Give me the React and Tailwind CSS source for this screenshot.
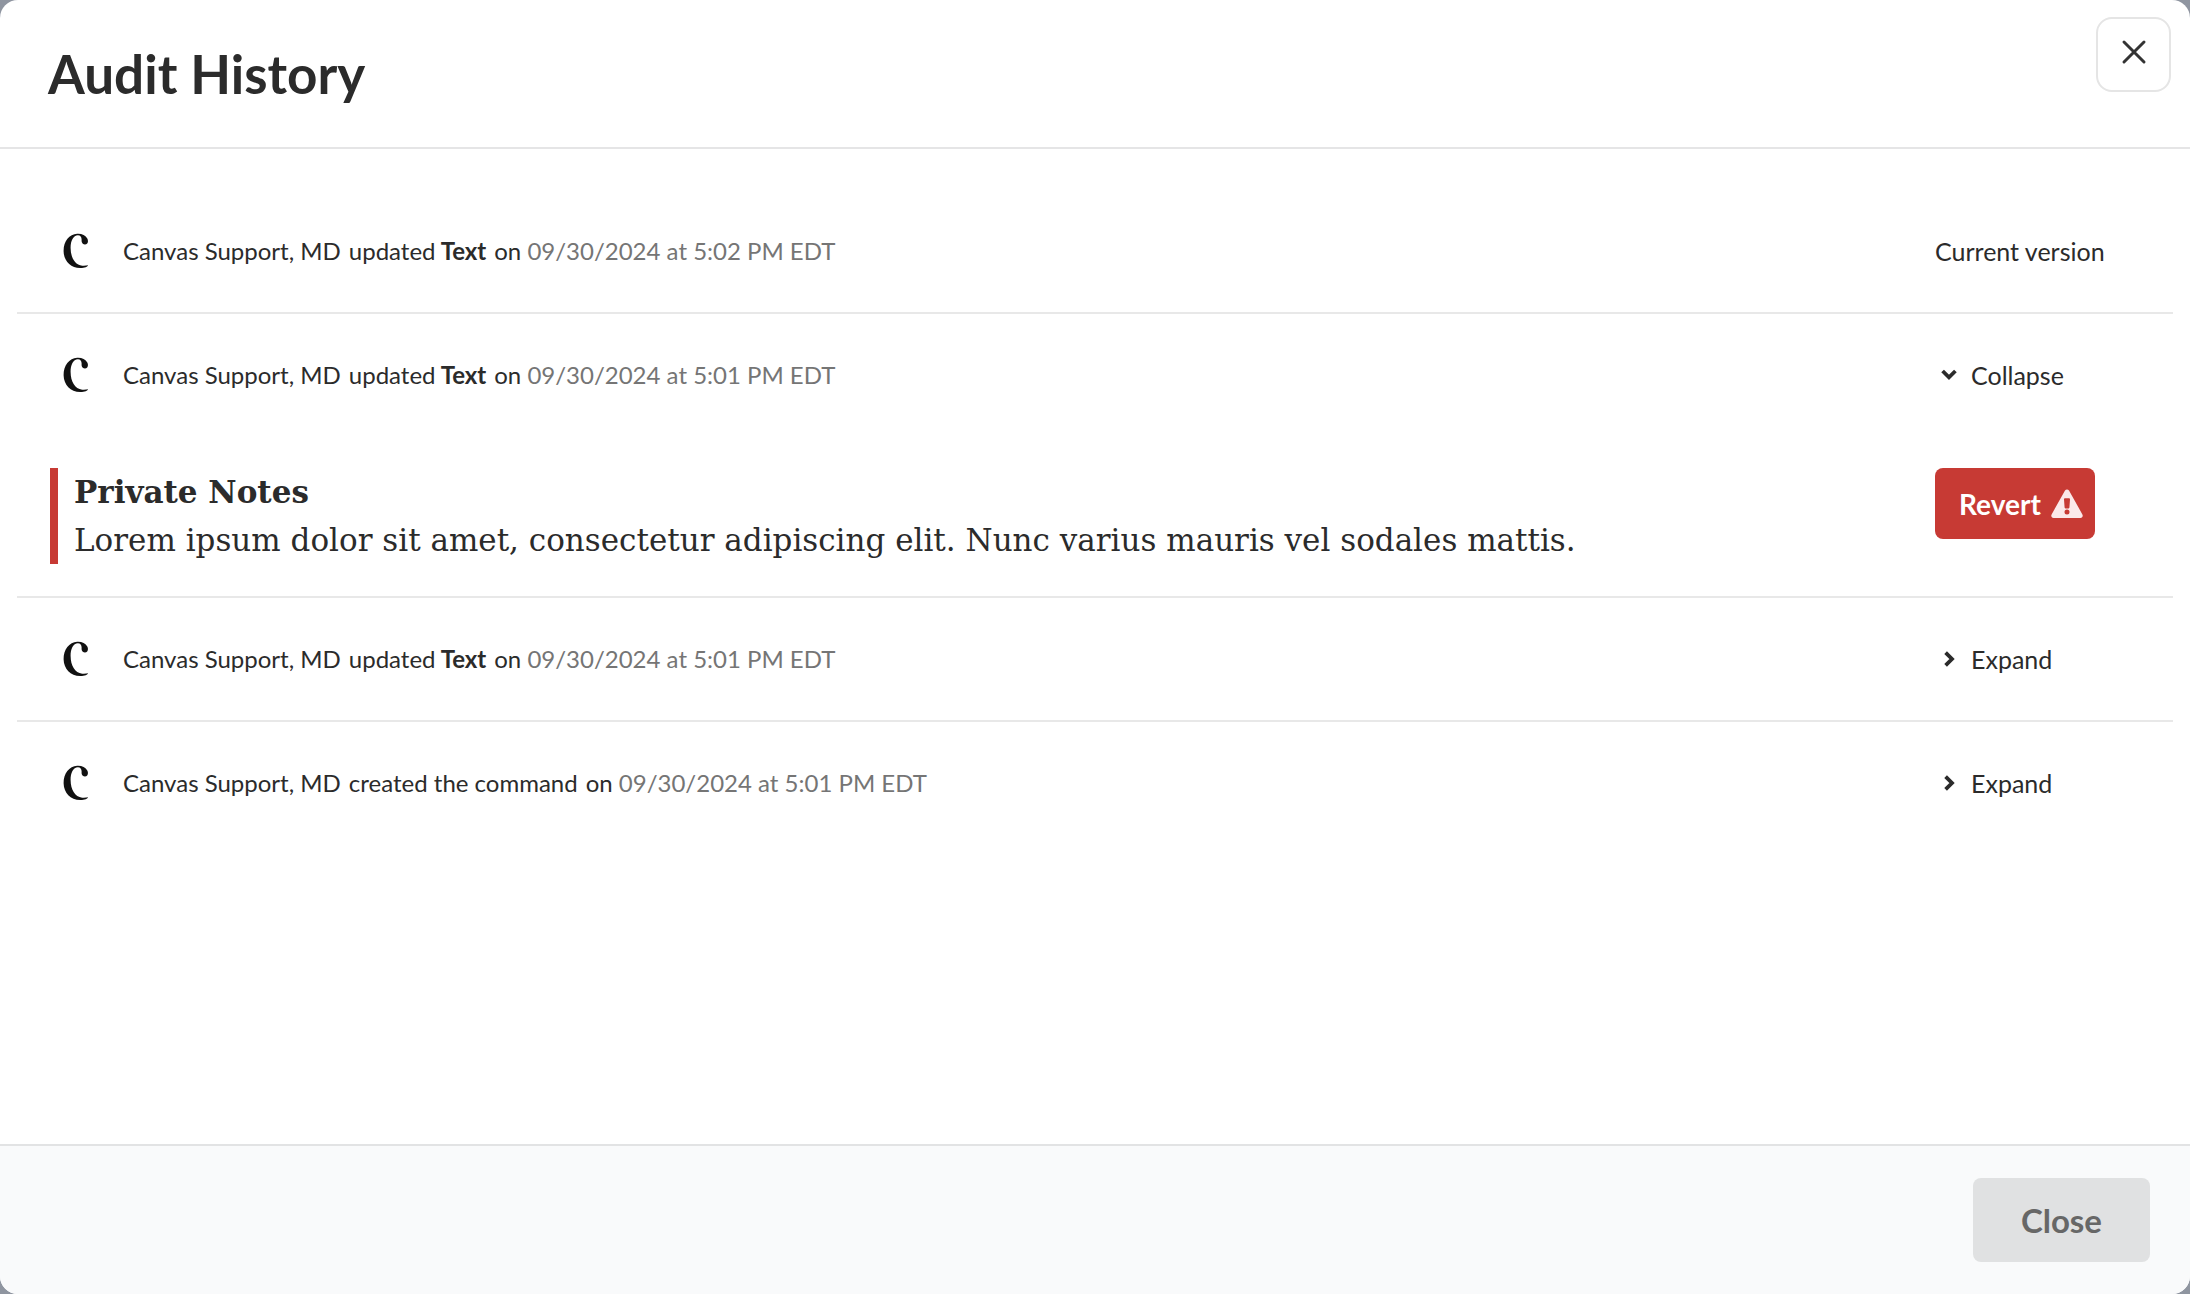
import React, { useState } from "react";

function CanvasLogo() {
  return (
    <svg viewBox="0 0 26 36" className="h-9 w-[26px] shrink-0 text-[#111111]" fill="currentColor" aria-hidden="true">
      <path d="M14.2 0.8C18.6 0.5 22.6 2.4 24.3 5.6C25.1 7.2 25.3 9.2 24.2 10.5C23.2 11.6 21 11.7 19.8 10.7C18.4 9.6 18.6 7.9 18.6 6.3C18.6 4.2 17.4 2.2 14.9 2.2C10.2 2.2 7.5 8 7.6 15C7.7 24.5 11.8 31.8 19.2 32.7C21.5 33 23.6 32.6 25 32.3C24.9 33.7 21.5 35 17.6 35.1C7.6 35.3 0.8 27.8 0.6 18.3C0.4 8.4 6.2 1.3 14.2 0.8Z" />
    </svg>
  );
}

function Chevron({ open }) {
  return (
    <svg viewBox="0 0 20 20" className="size-5 shrink-0" fill="none" stroke="currentColor" strokeWidth="3.8" aria-hidden="true">
      {open ? <path d="M3.6 6L10 12.4L16.4 6" /> : <path d="M6.6 3.6L13 10L6.6 16.4" />}
    </svg>
  );
}

function WarningIcon() {
  return (
    <svg viewBox="0 0 32 30" className="h-[30px] w-8 shrink-0 text-[#fbe9ea]" aria-hidden="true">
      <path
        fill="currentColor"
        fillRule="evenodd"
        d="M14 1.6C14.9 0.1 17.1 0.1 18 1.6L31.4 25.4C32.3 27 31.4 29 29.4 29H2.6C0.6 29 -0.3 27 0.6 25.4ZM13 10.6C12.9 9.8 13.4 9.3 14.1 9.3H17.9C18.6 9.3 19.1 9.8 19 10.6L18.4 18.4C18.3 19 17.9 19.4 17.3 19.4H14.7C14.1 19.4 13.7 19 13.6 18.4ZM16 20.6A2.5 2.5 0 1 1 16 25.6A2.5 2.5 0 1 1 16 20.6Z"
      />
    </svg>
  );
}

const entries = [
  { id: 1, action: "updated", subject: "Text", time: "09/30/2024 at 5:02 PM EDT", current: true },
  {
    id: 2,
    action: "updated",
    subject: "Text",
    time: "09/30/2024 at 5:01 PM EDT",
    title: "Private Notes",
    body: "Lorem ipsum dolor sit amet, consectetur adipiscing elit. Nunc varius mauris vel sodales mattis.",
  },
  { id: 3, action: "updated", subject: "Text", time: "09/30/2024 at 5:01 PM EDT" },
  { id: 4, action: "created the command", time: "09/30/2024 at 5:01 PM EDT" },
];

function Entry({ entry, open, onToggle }) {
  return (
    <li className="border-b-2 border-[#e8e8e8] last:border-b-0">
      <div className="flex h-[122px] items-center pl-[46px]">
        <CanvasLogo />
        <p className="ml-[34px] flex flex-1 gap-2 text-2xl whitespace-nowrap">
          <span>Canvas Support, MD</span>
          <span>
            {entry.action}
            {entry.subject && <strong className="font-bold"> {entry.subject}</strong>}
          </span>
          <span>
            on <time className="text-[#757575]">{entry.time}</time>
          </span>
        </p>
        <div className="w-[238px] shrink-0">
          {entry.current ? (
            <span>Current version</span>
          ) : (
            <button type="button" aria-expanded={open} onClick={onToggle} className="flex items-center gap-3 pl-1">
              <Chevron open={open} />
              {open ? "Collapse" : "Expand"}
            </button>
          )}
        </div>
      </div>
      {open && entry.body && (
        <div className="flex items-start pt-8 pb-8 pl-[33px]">
          <div className="mr-8 flex-1 border-l-8 border-[#c73a34] pl-4 font-['DejaVu_Serif',serif] text-[31px] leading-[48px]">
            <h2 className="font-bold">{entry.title}</h2>
            <p>{entry.body}</p>
          </div>
          <div className="w-[238px] shrink-0">
            <button
              type="button"
              className="flex h-[71px] items-center gap-[10px] rounded-lg bg-[#c73a34] pr-3 pl-6 text-[28px] font-bold text-white"
            >
              Revert
              <WarningIcon />
            </button>
          </div>
        </div>
      )}
    </li>
  );
}

export default function App() {
  const [openId, setOpenId] = useState(2);
  return (
    <div className="min-h-screen bg-[#8f95a0] font-['Lato',sans-serif] text-[25px] leading-9 text-[#2b2b2b]">
      <section role="dialog" aria-labelledby="dialog-title" className="flex min-h-screen flex-col overflow-hidden rounded-[18px] bg-white">
        <header className="flex items-start justify-between border-b-2 border-[#e5e5e6] pt-[17px] pr-[19px] pb-9 pl-12">
          <h1 id="dialog-title" className="mt-5 text-[53px] leading-[74px] font-bold">Audit History</h1>
          <button type="button" aria-label="Close dialog" className="flex size-[75px] items-start justify-center rounded-2xl border-2 border-[#e5e5e5] pt-5">
            <svg viewBox="0 0 26 26" className="size-[26px]" fill="none" stroke="#333333" strokeWidth="3" strokeLinecap="round" aria-hidden="true">
              <path d="M3 3L23 23M23 3L3 23" />
            </svg>
          </button>
        </header>
        <ul className="flex-1 px-[17px] pt-[41px]">
          {entries.map((entry) => (
            <Entry
              key={entry.id}
              entry={entry}
              open={openId === entry.id}
              onToggle={() => setOpenId(openId === entry.id ? null : entry.id)}
            />
          ))}
        </ul>
        <footer className="flex justify-end border-t-2 border-[#e2e3e4] bg-[#f9fafb] px-10 py-8">
          <button type="button" className="h-[84px] rounded-lg bg-[#e0e1e2] px-12 text-[33px] font-bold text-[#676767]">
            Close
          </button>
        </footer>
      </section>
    </div>
  );
}
